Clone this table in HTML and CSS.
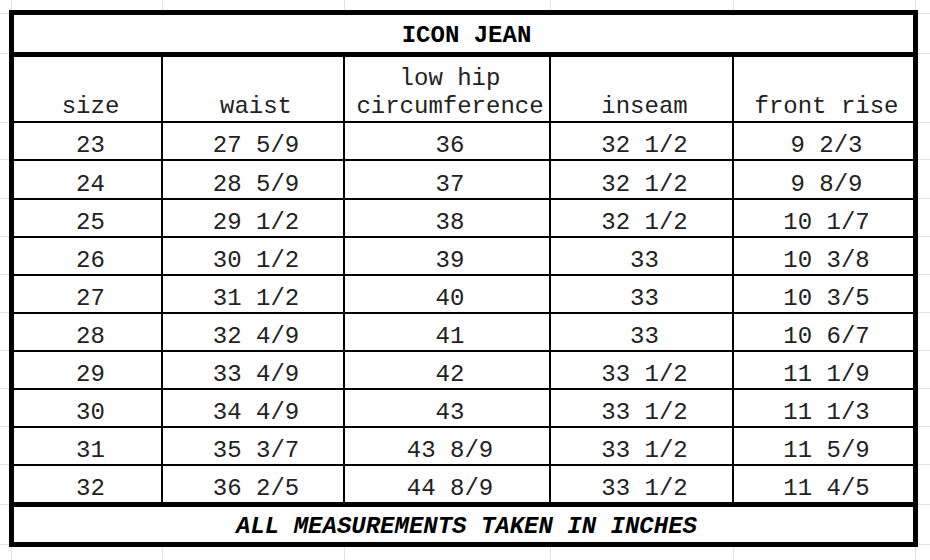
FILE: index.html
```html
<!DOCTYPE html>
<html lang="en">
<head>
<meta charset="utf-8">
<title>Icon Jean size chart</title>
<link rel="stylesheet" href="styles.css">
</head>
<body>
<main class="sheet">
  <div class="chart">
    <div class="cell title">ICON JEAN</div>

    <div class="cell head">size</div>
    <div class="cell head">waist</div>
    <div class="cell head">low hip<br>circumference</div>
    <div class="cell head">inseam</div>
    <div class="cell head">front rise</div>

    <div class="cell">23</div><div class="cell">27 5/9</div><div class="cell">36</div><div class="cell">32 1/2</div><div class="cell">9 2/3</div>
    <div class="cell">24</div><div class="cell">28 5/9</div><div class="cell">37</div><div class="cell">32 1/2</div><div class="cell">9 8/9</div>
    <div class="cell">25</div><div class="cell">29 1/2</div><div class="cell">38</div><div class="cell">32 1/2</div><div class="cell">10 1/7</div>
    <div class="cell">26</div><div class="cell">30 1/2</div><div class="cell">39</div><div class="cell">33</div><div class="cell">10 3/8</div>
    <div class="cell">27</div><div class="cell">31 1/2</div><div class="cell">40</div><div class="cell">33</div><div class="cell">10 3/5</div>
    <div class="cell">28</div><div class="cell">32 4/9</div><div class="cell">41</div><div class="cell">33</div><div class="cell">10 6/7</div>
    <div class="cell">29</div><div class="cell">33 4/9</div><div class="cell">42</div><div class="cell">33 1/2</div><div class="cell">11 1/9</div>
    <div class="cell">30</div><div class="cell">34 4/9</div><div class="cell">43</div><div class="cell">33 1/2</div><div class="cell">11 1/3</div>
    <div class="cell">31</div><div class="cell">35 3/7</div><div class="cell">43 8/9</div><div class="cell">33 1/2</div><div class="cell">11 5/9</div>
    <div class="cell">32</div><div class="cell">36 2/5</div><div class="cell">44 8/9</div><div class="cell">33 1/2</div><div class="cell">11 4/5</div>

    <div class="cell foot">ALL MEASUREMENTS TAKEN IN INCHES</div>
  </div>
</main>
</body>
</html>
```

FILE: styles.css
```css
html, body {
  margin: 0;
  padding: 0;
  background: #fff;
}

.sheet {
  box-sizing: border-box;
  width: 930px;
  height: 560px;
  padding: 10px 0 0 9px;
  font-family: "Liberation Mono", "Courier New", monospace;
  font-size: 24px;
  color: #222;
  background-color: #fff;
  background-image:
    linear-gradient(to right,
      transparent 0 11px, #e2e2e2 11px 12px,
      transparent 12px 162px, #e2e2e2 162px 163px,
      transparent 163px 344px, #e2e2e2 344px 345px,
      transparent 345px 550px, #e2e2e2 550px 551px,
      transparent 551px 733px, #e2e2e2 733px 734px,
      transparent 734px 915px, #e2e2e2 915px 916px,
      transparent 916px),
    linear-gradient(to bottom,
      transparent 0 13px, #e2e2e2 13px 14px,
      transparent 14px 53px, #e2e2e2 53px 54px,
      transparent 54px 122px, #e2e2e2 122px 123px,
      transparent 123px 159px, #e2e2e2 159px 160px,
      transparent 160px 198px, #e2e2e2 198px 199px,
      transparent 199px 236px, #e2e2e2 236px 237px,
      transparent 237px 274px, #e2e2e2 274px 275px,
      transparent 275px 312px, #e2e2e2 312px 313px,
      transparent 313px 350px, #e2e2e2 350px 351px,
      transparent 351px 388px, #e2e2e2 388px 389px,
      transparent 389px 426px, #e2e2e2 426px 427px,
      transparent 427px 464px, #e2e2e2 464px 465px,
      transparent 465px 504px, #e2e2e2 504px 505px,
      transparent 505px 544px, #e2e2e2 544px 545px,
      transparent 545px);
}

.chart {
  display: grid;
  width: max-content;
  grid-template-columns: 147px 180px 204px 181px 179px;
  grid-template-rows: 40px 64px 36px 37px repeat(8, 36px) 38px;
  gap: 2px;
  background: #000;
  border: 5px solid #000;
}

.cell {
  box-sizing: border-box;
  background: #fff;
  display: flex;
  align-items: flex-end;
  justify-content: center;
  text-align: center;
  padding-left: 6px;
  line-height: 26px;
  white-space: pre;
}

.head {
  line-height: 28px;
}

.title {
  grid-column: 1 / -1;
  border-bottom: 3px solid #000;
  font-weight: bold;
  color: #000;
  line-height: 28px;
  padding-bottom: 2px;
}

.foot {
  grid-column: 1 / -1;
  border-top: 3px solid #000;
  font-weight: bold;
  font-style: italic;
  color: #000;
  line-height: 28px;
  padding-bottom: 1px;
}
```
